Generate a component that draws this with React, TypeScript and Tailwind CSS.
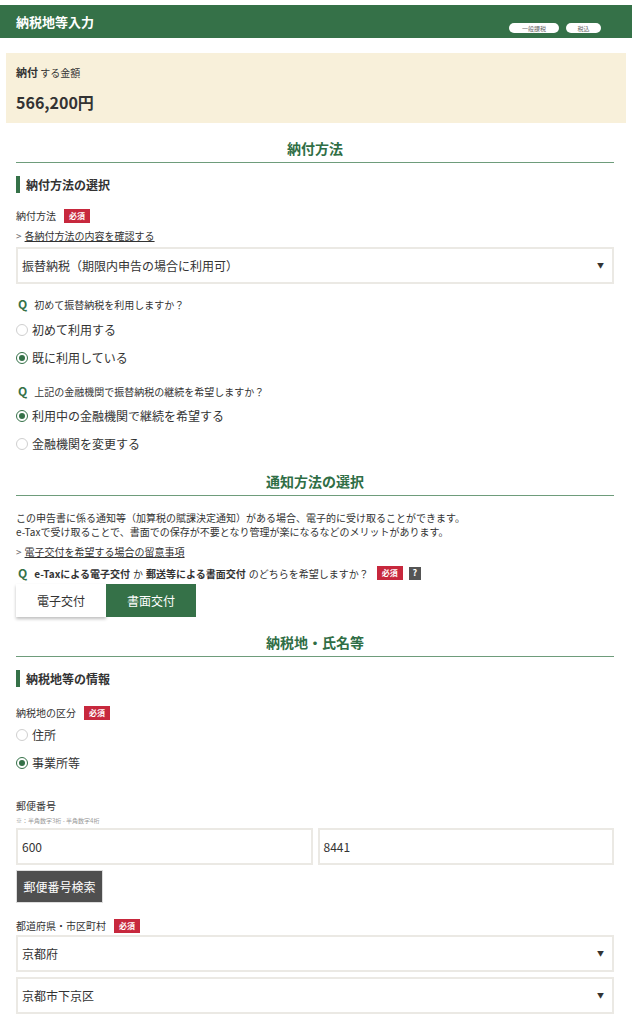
import React from 'react'

const font = { fontFamily: '"Noto Sans CJK JP", "Noto Sans", sans-serif' }

function Required() {
  return (
    <span className="ml-[8px] inline-flex h-[14px] items-center bg-[#c7283d] px-[5px] text-[8px] font-bold leading-none text-white">
      必須
    </span>
  )
}

function SectionTitle({ children }: { children: React.ReactNode }) {
  return (
    <div className="border-b border-[#6e9c7b] pb-[4px] text-center text-[14px] font-bold leading-[20px] text-[#2f6e45]">
      {children}
    </div>
  )
}

function SubTitle({ children }: { children: React.ReactNode }) {
  return (
    <div className="flex h-[17px] items-center border-l-[4px] border-[#357148] pl-[6px] text-[12px] font-bold text-[#333]">
      {children}
    </div>
  )
}

function Radio({ label, checked }: { label: string; checked?: boolean }) {
  return (
    <div className="flex h-[28px] items-center gap-[4px] text-[12px] text-[#333]">
      <span
        className={`flex h-[12px] w-[12px] items-center justify-center rounded-full border ${
          checked ? 'border-[#357148]' : 'border-[#cfcfcf]'
        }`}
      >
        {checked && <span className="h-[6px] w-[6px] rounded-full bg-[#357148]" />}
      </span>
      {label}
    </div>
  )
}

function Question({ children }: { children: React.ReactNode }) {
  return (
    <div className="flex items-center text-[10px] text-[#333]">
      <span className="mr-[7px] ml-[2px] text-[12px] font-bold text-[#357148]">Q</span>
      {children}
    </div>
  )
}

function Select({ value }: { value: string }) {
  return (
    <div className="flex h-[37px] items-center justify-between border-2 border-[#ebe9e4] bg-white pl-[4px] pr-[8px] text-[12px] text-[#333]">
      <span>{value}</span>
      <span className="text-[7px] text-[#333]">▼</span>
    </div>
  )
}

function LinkLine({ children }: { children: React.ReactNode }) {
  return (
    <div className="flex items-center text-[10px] text-[#333]">
      <span className="mr-[3px] text-[#666]">&gt;</span>
      <span className="underline">{children}</span>
    </div>
  )
}

export default function App() {
  return (
    <div className="w-[632px] bg-white pt-[5px] pb-[6px]" style={font}>
      {/* header */}
      <div className="flex h-[33px] items-start justify-between bg-[#357148] pl-[16px] pr-[31px]">
        <div className="pt-[7px] text-[13px] font-bold text-white">納税地等入力</div>
        <div className="flex gap-[7px] pt-[18px]">
          <span className="flex h-[10px] w-[50px] items-center justify-center rounded-full bg-white text-[6px] text-[#666]">一般課税</span>
          <span className="flex h-[10px] w-[35px] items-center justify-center rounded-full bg-white text-[6px] text-[#666]">税込</span>
        </div>
      </div>

      {/* amount */}
      <div className="mx-[6px] mt-[15px] h-[70px] bg-[#f8f0da] pl-[10px] pt-[11px]">
        <div className="text-[10px] text-[#333]">
          <span className="text-[11px] font-bold">納付</span> する金額
        </div>
        <div className="mt-[9px] text-[16px] font-bold text-[#333]">566,200円</div>
      </div>

      <div className="pl-[16px] pr-[18px]">
        {/* 納付方法 */}
        <div className="mt-[15px]">
          <SectionTitle>納付方法</SectionTitle>
        </div>
        <div className="mt-[13px]">
          <SubTitle>納付方法の選択</SubTitle>
        </div>
        <div className="mt-[15px] flex items-center text-[10px] text-[#333]">
          納付方法
          <Required />
        </div>
        <div className="mt-[5px]">
          <LinkLine>各納付方法の内容を確認する</LinkLine>
        </div>
        <div className="mt-[4px]">
          <Select value="振替納税（期限内申告の場合に利用可）" />
        </div>
        <div className="mt-[11px]">
          <Question>初めて振替納税を利用しますか？</Question>
        </div>
        <div className="mt-[3px]">
          <Radio label="初めて利用する" />
          <Radio label="既に利用している" checked />
        </div>
        <div className="mt-[10px]">
          <Question>上記の金融機関で振替納税の継続を希望しますか？</Question>
        </div>
        <div className="mt-[2px]">
          <Radio label="利用中の金融機関で継続を希望する" checked />
          <Radio label="金融機関を変更する" />
        </div>

        {/* 通知方法 */}
        <div className="mt-[13px]">
          <SectionTitle>通知方法の選択</SectionTitle>
        </div>
        <div className="mt-[15px] text-[10px] leading-[14px] text-[#333]">
          <div>この申告書に係る通知等（加算税の賦課決定通知）がある場合、電子的に受け取ることができます。</div>
          <div>e-Taxで受け取ることで、書面での保存が不要となり管理が楽になるなどのメリットがあります。</div>
        </div>
        <div className="mt-[5px]">
          <LinkLine>電子交付を希望する場合の留意事項</LinkLine>
        </div>
        <div className="mt-[5px] flex items-center">
          <Question>
            <span className="font-bold">e-Taxによる電子交付</span>
            <span className="mx-[3px]">か</span>
            <span className="font-bold">郵送等による書面交付</span>
            <span className="ml-[3px]">のどちらを希望しますか？</span>
          </Question>
          <Required />
          <span className="ml-[6px] flex h-[13px] w-[12px] items-center justify-center bg-[#555] text-[9px] font-bold text-white">?</span>
        </div>
        <div className="mt-[2px] flex">
          <div className="flex h-[33px] w-[90px] items-center justify-center bg-white text-[12px] text-[#333] shadow-[0_2px_3px_rgba(0,0,0,0.25)]">
            電子交付
          </div>
          <div className="flex h-[33px] w-[90px] items-center justify-center bg-[#357148] text-[12px] text-white">
            書面交付
          </div>
        </div>

        {/* 納税地・氏名等 */}
        <div className="mt-[15px]">
          <SectionTitle>納税地・氏名等</SectionTitle>
        </div>
        <div className="mt-[13px]">
          <SubTitle>納税地等の情報</SubTitle>
        </div>
        <div className="mt-[18px] flex items-center text-[10px] text-[#333]">
          納税地の区分
          <Required />
        </div>
        <div className="mt-[1px]">
          <Radio label="住所" />
          <Radio label="事業所等" checked />
        </div>
        <div className="mt-[21px] text-[10px] text-[#333]">郵便番号</div>
        <div className="mt-[3px] text-[6px] text-[#999]">※：半角数字3桁 - 半角数字4桁</div>
        <div className="mt-[3px] flex gap-[5px]">
          <div className="flex h-[37px] flex-1 items-center border-2 border-[#ebe9e4] pl-[4px] text-[12px] text-[#333]">600</div>
          <div className="flex h-[37px] flex-1 items-center border-2 border-[#ebe9e4] pl-[4px] text-[12px] text-[#333]">8441</div>
        </div>
        <div className="mt-[5px] flex h-[33px] w-[87px] items-center justify-center border border-[#ddd] bg-[#4f4f4f] text-[12px] text-white">
          郵便番号検索
        </div>
        <div className="mt-[15px] flex items-center text-[10px] text-[#333]">
          都道府県・市区町村
          <Required />
        </div>
        <div className="mt-[2px]">
          <Select value="京都府" />
        </div>
        <div className="mt-[5px]">
          <Select value="京都市下京区" />
        </div>
      </div>
    </div>
  )
}
